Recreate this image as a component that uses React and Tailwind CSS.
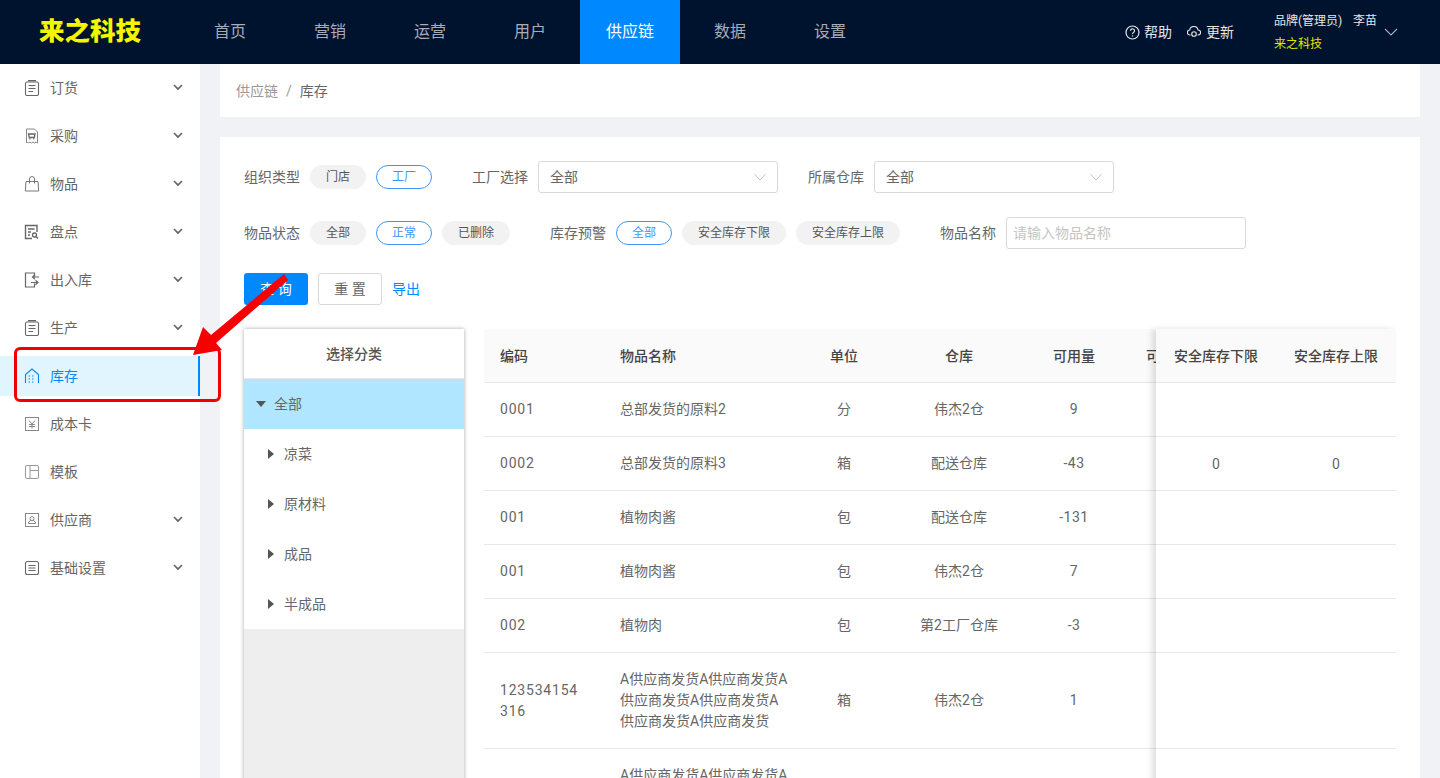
import React from "react";

const Chevron = () => (
  <svg width="10" height="7" viewBox="0 0 10 7" fill="none" stroke="#666" strokeWidth="1.7" className="ml-auto mr-[17px] -mt-[2px]">
    <path d="M1 1l4 4 4-4" />
  </svg>
);

const S = ({ color = "#666", children }) => (
  <svg width="16" height="16" viewBox="0 0 16 16" fill="none" stroke={color} strokeWidth="1" className="shrink-0">
    {children}
  </svg>
);

const icons = {
  clip: (c) => (
    <S color={c}>
      <rect x="1.5" y="2" width="13" height="13.5" rx="1.5" strokeWidth="1.1" />
      <path d="M4 .7h8" strokeWidth="1.4" />
      <path d="M4.5 5.5h7M4.5 8.5h7M4.5 11.5h4.5" />
    </S>
  ),
  bill: (c) => (
    <S color={c}>
      <path d="M2.5 1h8l3 3v11l-1.5-1-1.5 1-1.5-1-1.5 1-1.5-1-1.5 1-1-1-1 1z" stroke="#888" />
      <path d="M4.5 6h6.5l-.7 3.5H5.3zM5.5 11h.8M9.5 11h.8" strokeWidth="1.3" />
    </S>
  ),
  bag: (c) => (
    <S color={c}>
      <path d="M2 5.5h12l.7 9.5H1.3z" stroke="#777" />
      <path d="M5.5 7.5V3a2.5 2.5 0 0 1 5 0v4.5" stroke="#777" />
    </S>
  ),
  check: (c) => (
    <S color={c}>
      <path d="M8 14.5H1.5v-13h11.5V8" strokeWidth="1.4" />
      <path d="M4 5h6.5M4 8h3M4 11h2" strokeWidth="1.4" />
      <circle cx="10.5" cy="11" r="2" strokeWidth="1.3" />
      <path d="M12 12.5l2 2" strokeWidth="1.5" />
    </S>
  ),
  inout: (c) => (
    <S color={c}>
      <path d="M10.5 4.5V1H1.5v14h9v-3.5" strokeWidth="1.2" />
      <path d="M15 5H8.5M11 2.8L8.5 5l2.5 2.2M7 10.5h7M11.5 8.3l2.5 2.2-2.5 2.2" strokeWidth="1.2" />
    </S>
  ),
  home: (c) => (
    <S color={c}>
      <path d="M1.5 15V6.5L8 1l6.500 5.500V15" strokeWidth="1.1" />
      <path d="M4.500 8h1.500M4.500 11h1.500M4.500 14h1.500M8 8h1.500M8 11h1.500M8 14h1.500" strokeWidth="1.2" />
    </S>
  ),
  yen: (c) => (
    <S color={c}>
      <rect x="1.500" y="1.500" width="13" height="13" stroke="#888" />
      <path d="M5 4.500l3 3.500 3-3.500M8 8v4.500M5 8.500h6M5 10.500h6" stroke="#888" />
    </S>
  ),
  tpl: (c) => (
    <S color={c}>
      <rect x="1.500" y="1.500" width="13" height="13" rx="1.500" stroke="#999" />
      <path d="M6 1.500v13M6 6.500h8.500" stroke="#999" />
    </S>
  ),
  sup: (c) => (
    <S color={c}>
      <rect x="1.500" y="1.500" width="13" height="13" stroke="#888" />
      <circle cx="8" cy="6.500" r="2" stroke="#888" />
      <path d="M4.500 11.500h7v-1.500l-2-1.500h-3l-2 1.500z" stroke="#888" />
    </S>
  ),
  list: (c) => (
    <S color={c}>
      <rect x="1.500" y="1.500" width="13" height="13" rx="2" strokeWidth="1.100" />
      <path d="M4.500 5.500h7M4.500 8h7M4.500 10.500h7" />
    </S>
  ),
};

const side = [
  ["订货", "clip", 1],
  ["采购", "bill", 1],
  ["物品", "bag", 1],
  ["盘点", "check", 1],
  ["出入库", "inout", 1],
  ["生产", "clip", 1],
  ["库存", "home", 0, 1],
  ["成本卡", "yen", 0],
  ["模板", "tpl", 0],
  ["供应商", "sup", 1],
  ["基础设置", "list", 1],
];

const Pill = ({ w, on, children }) => (
  <span
    className={`inline-flex items-center justify-center h-6 rounded-xl text-xs border shrink-0 ${w} ${
      on ? "border-[#3e97f5] text-[#3e97f5] bg-white" : "border-[#f2f2f2] bg-[#f2f2f2] text-[#555]"
    }`}
  >
    {children}
  </span>
);

const Select = () => (
  <div className="w-[240px] h-8 border border-[#d9d9d9] rounded-[3px] flex items-center pl-[11px] pr-[11px] text-sm text-[#666] shrink-0">
    全部
    <svg width="12" height="8" viewBox="0 0 12 8" fill="none" stroke="#c4c4c4" className="ml-auto">
      <path d="M.5 1L6 7l5.500-6" />
    </svg>
  </div>
);

const rows = [
  { c: "0001", n: "总部发货的原料2", u: "分", w: "伟杰2仓", q: "9", h: "h-[54px]" },
  { c: "0002", n: "总部发货的原料3", u: "箱", w: "配送仓库", q: "-43", h: "h-[54px]", low: "0", up: "0" },
  { c: "001", n: "植物肉酱", u: "包", w: "配送仓库", q: "-131", h: "h-[54px]" },
  { c: "001", n: "植物肉酱", u: "包", w: "伟杰2仓", q: "7", h: "h-[54px]" },
  { c: "002", n: "植物肉", u: "包", w: "第2工厂仓库", q: "-3", h: "h-[54px]" },
  { c: "123534154316", n: "A供应商发货A供应商发货A供应商发货A供应商发货A供应商发货A供应商发货", u: "箱", w: "伟杰2仓", q: "1", h: "h-[96px]" },
  { c: "123534154316", n: "A供应商发货A供应商发货A供应商发货A供应商发货A供应商发货A供应商发货", u: "箱", w: "伟杰2仓", q: "1", h: "h-[96px]" },
];

const Tree = ({ open, sub, active, children }) => (
  <div className={`h-[50px] flex items-center text-sm text-[#666] ${active ? "bg-[#b0e6ff]" : "bg-white"} ${sub ? "pl-6" : "pl-3"}`}>
    {open ? (
      <span className="w-0 h-0 border-x-[5px] border-x-transparent border-t-[6px] border-t-[#555] mr-[8px] ml-0" />
    ) : (
      <span className="w-0 h-0 border-y-[5px] border-y-transparent border-l-[6px] border-l-[#555] mr-[10px]" />
    )}
    {children}
  </div>
);

export default function App() {
  return (
    <div
      className="relative h-[778px] overflow-hidden bg-[#f0f2f5] flex flex-col"
      style={{ fontFamily: 'Roboto, "Noto Sans CJK SC", sans-serif' }}
    >
      <header className="h-16 shrink-0 bg-[#00132e] flex items-center text-white">
        <div className="w-[180px] pl-[39px] text-[25.500px] font-black text-[#f5f500] tracking-normal leading-none">
          来之科技
        </div>
        <nav className="flex h-full">
          {["首页", "营销", "运营", "用户", "供应链", "数据", "设置"].map((t) => (
            <div
              key={t}
              className={`w-[100px] h-full flex items-center justify-center text-base ${
                t === "供应链" ? "bg-[#0088ff] text-white" : "text-[#a6adb8]"
              }`}
            >
              {t}
            </div>
          ))}
        </nav>
        <div className="ml-auto flex items-center h-full text-sm text-[#e6e6e6]">
          <svg width="15" height="15" viewBox="0 0 15 15" fill="none" stroke="#e6e6e6" className="mr-[4px]">
            <circle cx="7.500" cy="7.500" r="6.500" strokeWidth="1.200" />
            <path d="M5.500 5.800a2 2 0 1 1 3 1.700c-.7.400-1 .8-1 1.500M7.500 10.300v1.200" strokeWidth="1.200" />
          </svg>
          <span>帮助</span>
          <svg width="14" height="12" viewBox="0 0 14 12" fill="none" stroke="#e6e6e6" className="ml-[15px] mr-[5px]">
            <path d="M3.500 9H3a2.500 2.500 0 0 1-.3-5A4.200 4.200 0 0 1 11 4a2.500 2.500 0 0 1 .2 5h-.7" strokeWidth="1.100" />
            <circle cx="7" cy="8" r="2.300" strokeWidth="1.100" />
          </svg>
          <span>更新</span>
          <div className="ml-10 w-[103px] text-xs leading-none">
            <div className="flex justify-between whitespace-nowrap">
              <span>品牌(管理员)</span>
              <span>李苗</span>
            </div>
            <div className="mt-[11px] text-[#e3e300]">来之科技</div>
          </div>
          <svg width="14" height="8" viewBox="0 0 14 8" fill="none" stroke="#a6adb8" strokeWidth="1.100" className="ml-[7px] mr-[42px] -mt-px">
            <path d="M1 1l6 6 6-6" />
          </svg>
        </div>
      </header>
      <div className="flex flex-1 min-h-0">
        <aside className="w-[200px] shrink-0 bg-white pt-1">
          {side.map(([t, ic, chev, act]) => (
            <div
              key={t}
              className={`h-10 mb-2 flex items-center pl-6 text-sm ${
                act ? "bg-[#e1f5fe] text-[#0088ff] border-r-2 border-[#0088ff]" : "text-[#666]"
              }`}
            >
              {icons[ic](act ? "#0088ff" : "#666")}
              <span className="ml-[10px]">{t}</span>
              {chev ? <Chevron /> : null}
            </div>
          ))}
        </aside>
        <main className="flex-1 min-w-0 px-5 overflow-hidden">
          <div className="h-[53px] bg-white flex items-center pl-4 text-sm text-[#999]">
            供应链
            <span className="mx-2">/</span>
            <span className="text-[#666]">库存</span>
          </div>
          <div className="mt-5 bg-white px-6 pt-6 h-[700px]">
            <div className="h-8 flex items-center text-sm text-[#666]">
              <span className="mr-[10px]">组织类型</span>
              <Pill w="w-14">门店</Pill>
              <span className="ml-[10px]" />
              <Pill w="w-14" on>工厂</Pill>
              <span className="ml-10 mr-[10px]">工厂选择</span>
              <Select />
              <span className="ml-[30px] mr-[10px]">所属仓库</span>
              <Select />
            </div>
            <div className="h-8 mt-6 flex items-center text-sm text-[#666]">
              <span className="mr-[10px]">物品状态</span>
              <div className="flex gap-[10px]">
                <Pill w="w-14">全部</Pill>
                <Pill w="w-14" on>正常</Pill>
                <Pill w="w-[68px]">已删除</Pill>
              </div>
              <span className="ml-10 mr-[10px]">库存预警</span>
              <div className="flex gap-[10px]">
                <Pill w="w-14" on>全部</Pill>
                <Pill w="w-[104px]">安全库存下限</Pill>
                <Pill w="w-[104px]">安全库存上限</Pill>
              </div>
              <span className="ml-10 mr-[10px]">物品名称</span>
              <div className="w-[240px] h-8 border border-[#d9d9d9] rounded-[3px] flex items-center pl-[6px] text-sm text-[#c4c4c4]">
                请输入物品名称
              </div>
            </div>
            <div className="mt-6 flex items-center text-sm">
              <div className="w-16 h-8 rounded-[3px] bg-[#0088ff] text-white flex items-center justify-center">查 询</div>
              <div className="w-16 h-8 ml-[10px] rounded-[3px] border border-[#d9d9d9] text-[#666] flex items-center justify-center">重 置</div>
              <span className="ml-[10px] text-[#0088ff]">导出</span>
            </div>
            <div className="mt-6 flex">
              <div className="w-[220px] shrink-0 shadow-[0_0_4px_rgba(0,0,0,0.35)] bg-[#eeeeee] h-[500px]">
                <div className="h-[50px] bg-white border-b border-[#e8e8e8] flex items-center justify-center text-sm text-[#555] font-medium">
                  选择分类
                </div>
                <Tree open active>全部</Tree>
                <Tree sub>凉菜</Tree>
                <Tree sub>原材料</Tree>
                <Tree sub>成品</Tree>
                <Tree sub>半成品</Tree>
              </div>
              <div className="ml-5 flex-1 min-w-0 flex">
                <div className="w-[672px] shrink-0 overflow-hidden">
                  <div className="w-[760px]">
                    <div className="h-[54px] bg-[#fafafa] border-b border-[#e8e8e8] flex items-center text-sm text-[#444] font-medium">
                      <div className="w-[120px] pl-4">编码</div>
                      <div className="w-[210px] pl-4">物品名称</div>
                      <div className="w-[60px] text-center">单位</div>
                      <div className="w-[170px] text-center">仓库</div>
                      <div className="w-[60px] text-center">可用量</div>
                      <div className="w-[140px] text-center">可用成本</div>
                    </div>
                    {rows.map((r, i) => (
                      <div key={i} className={`${r.h} border-b border-[#e8e8e8] flex items-center text-sm text-[#666] leading-[21px]`}>
                        <div className="w-[120px] pl-4 pr-6 break-all tracking-[0.8px]">{r.c}</div>
                        <div className="w-[210px] pl-4 pr-6">{r.n}</div>
                        <div className="w-[60px] text-center">{r.u}</div>
                        <div className="w-[170px] text-center">{r.w}</div>
                        <div className="w-[60px] text-center tracking-[0.5px]">{r.q}</div>
                      </div>
                    ))}
                  </div>
                </div>
                <div className="w-[240px] shrink-0 relative bg-white shadow-[-4px_0_6px_rgba(0,0,0,0.12)]">
                  <div className="h-[54px] bg-[#fafafa] border-b border-[#e8e8e8] flex items-center text-sm text-[#444] font-medium">
                    <div className="w-[120px] text-center">安全库存下限</div>
                    <div className="w-[120px] text-center">安全库存上限</div>
                  </div>
                  {rows.map((r, i) => (
                    <div key={i} className={`${r.h} border-b border-[#e8e8e8] flex items-center text-sm text-[#666]`}>
                      <div className="w-[120px] text-center">{r.low}</div>
                      <div className="w-[120px] text-center">{r.up}</div>
                    </div>
                  ))}
                </div>
              </div>
            </div>
          </div>
        </main>
      </div>
      <div className="absolute left-[14px] top-[347px] w-[207px] h-[55px] border-[3px] border-[#f00000] rounded-md" />
      <svg className="absolute left-0 top-0 pointer-events-none" width="1440" height="778" fill="#f60000">
        <polygon points="193,355 203,327 211,335 284,274 288,280 216,343 222,350" />
      </svg>
    </div>
  );
}
